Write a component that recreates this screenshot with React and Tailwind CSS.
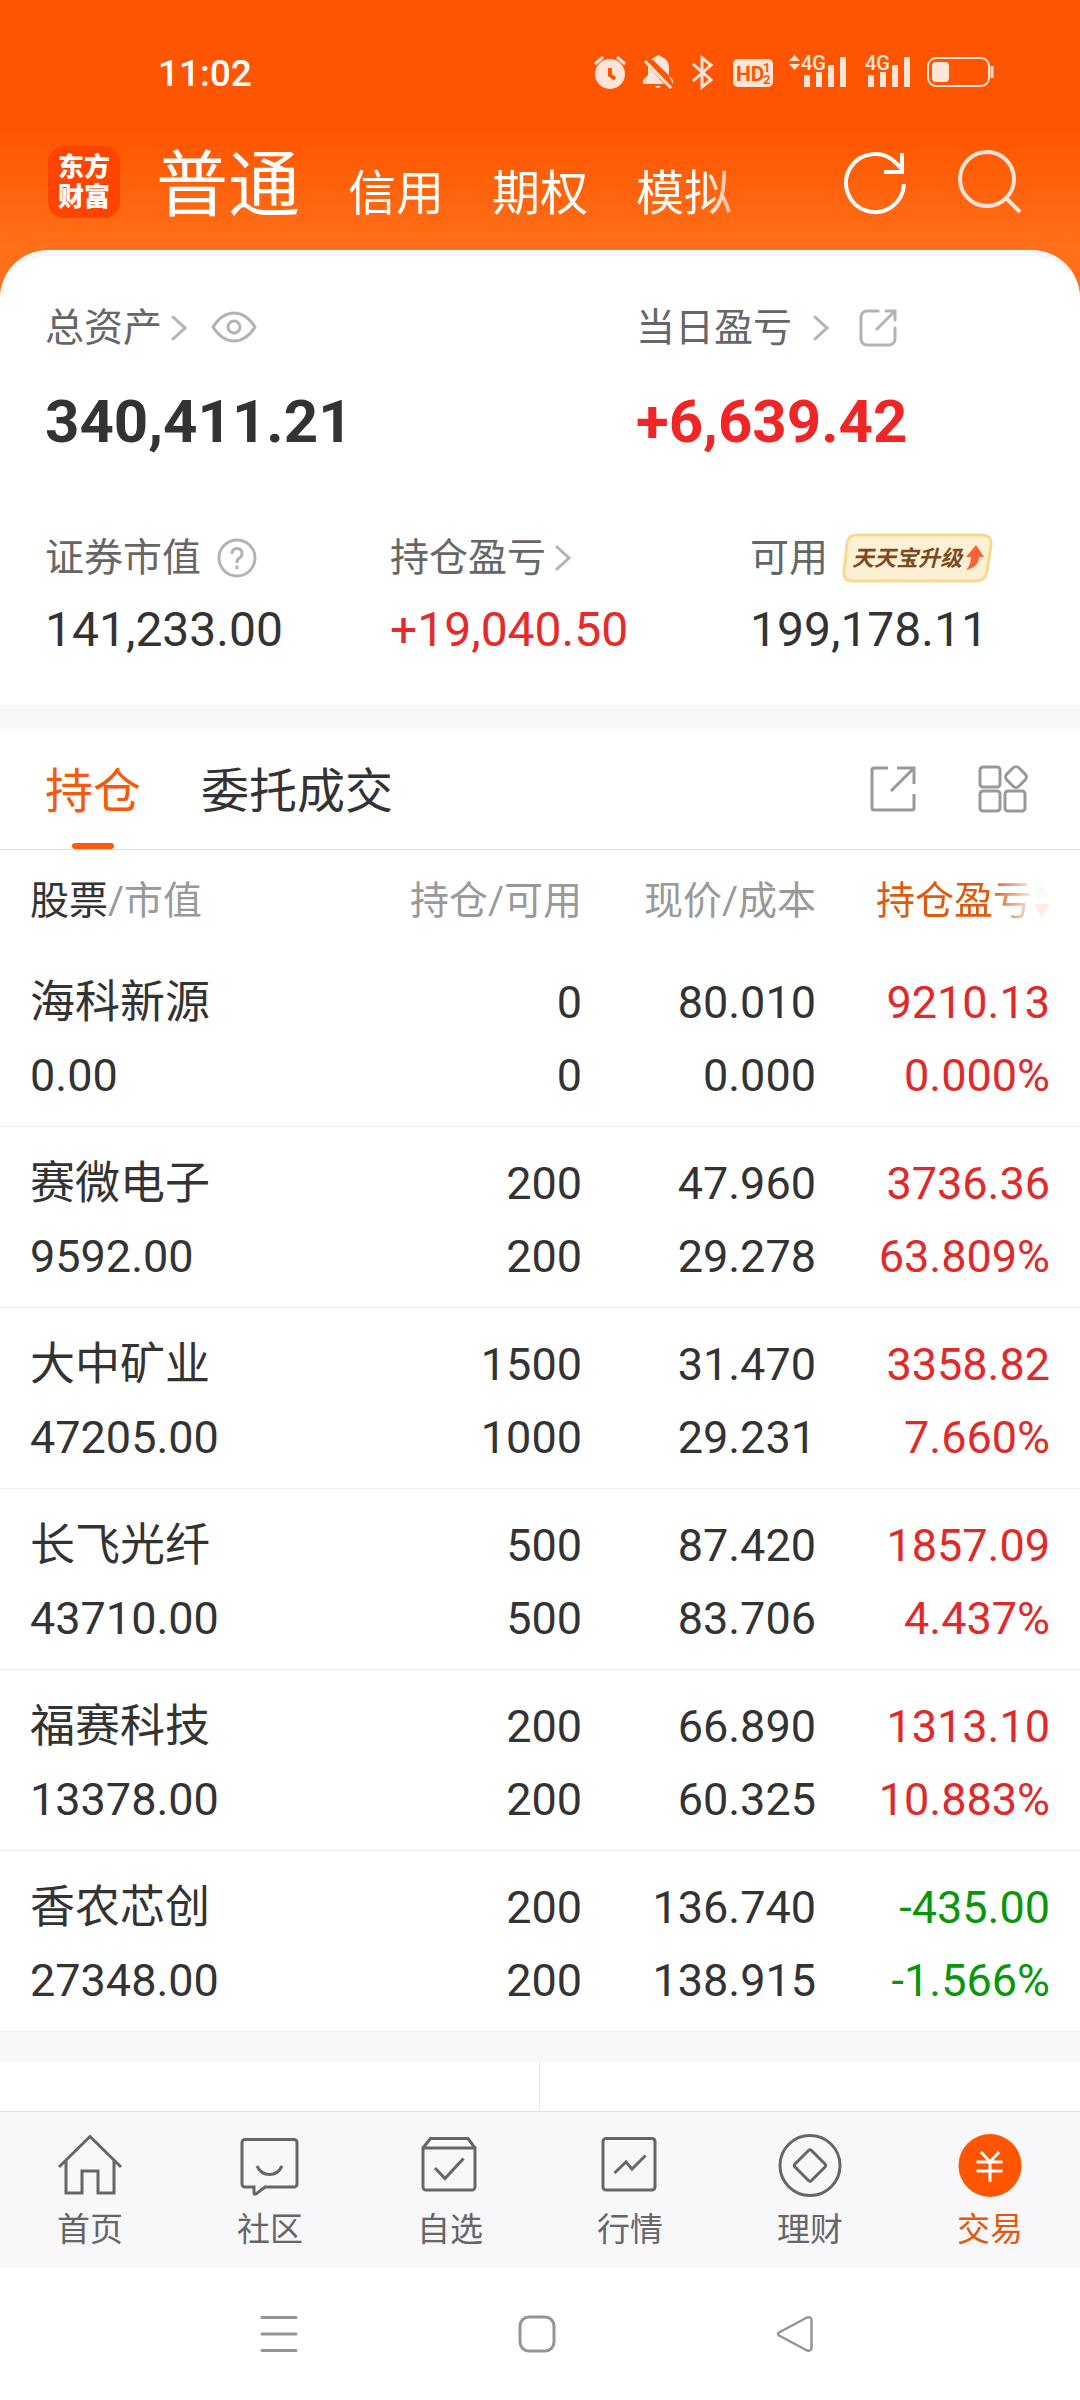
const accounts = ['信用', '期权', '模拟']

const holdings = [
  { name: '海科新源', value: '0.00', qty: '0', avail: '0', price: '80.010', cost: '0.000', pnl: '9210.13', rate: '0.000%' },
  { name: '赛微电子', value: '9592.00', qty: '200', avail: '200', price: '47.960', cost: '29.278', pnl: '3736.36', rate: '63.809%' },
  { name: '大中矿业', value: '47205.00', qty: '1500', avail: '1000', price: '31.470', cost: '29.231', pnl: '3358.82', rate: '7.660%' },
  { name: '长飞光纤', value: '43710.00', qty: '500', avail: '500', price: '87.420', cost: '83.706', pnl: '1857.09', rate: '4.437%' },
  { name: '福赛科技', value: '13378.00', qty: '200', avail: '200', price: '66.890', cost: '60.325', pnl: '1313.10', rate: '10.883%' },
  { name: '香农芯创', value: '27348.00', qty: '200', avail: '200', price: '136.740', cost: '138.915', pnl: '-435.00', rate: '-1.566%' },
]

const navItems = [
  { label: '首页', icon: <path d="M2 35 33 4.5 64 35M9 29v32h16V39h16v22h16V29" /> },
  { label: '社区', icon: <path d="M8 7.5h49a3 3 0 0 1 3 3V52a3 3 0 0 1-3 3H28l-9 7q-2 1-2-1v-6H8a3 3 0 0 1-3-3V10.500a3 3 0 0 1 3-3ZM20 34q4 8.500 12.500 8.500T45 34" /> },
  { label: '自选', icon: <path d="M6 16h52v39a3 3 0 0 1-3 3H9a3 3 0 0 1-3-3ZM6 16l7.500-9.500H51L58 16M18 36l10 10.500 18.500-20" /> },
  { label: '行情', icon: <path d="M9 6.500h46a3 3 0 0 1 3 3V55a3 3 0 0 1-3 3H9a3 3 0 0 1-3-3V9.500a3 3 0 0 1 3-3ZM17.500 41 29 30l6 7 13.500-13.500" /> },
  { label: '理财', icon: <><circle cx="33" cy="33.500" r="30" /><path d="M31.500 18.500q1.500-1.500 3 0l13.500 13.500q1.500 1.500 0 3L34.500 48.500q-1.500 1.500-3 0L18 35q-1.500-1.500 0-3Z" /></> },
  { label: '交易', active: true, icon: <><circle cx="33" cy="33.500" r="31.500" fill="#ff5500" stroke="none" /><path stroke="#fff" d="m24 20 9 10 9-10M19.500 30h26M19.500 39h26M33 30v20" /></> },
]

function Chevron() {
  return (
    <svg className="shrink-0" width="18" height="28" viewBox="0 0 18 28" fill="none" stroke="#b3b3b3" strokeWidth="3" strokeLinecap="round">
      <path d="M3 3 15 14 3 25" />
    </svg>
  )
}

function Signal({ arrows }) {
  return (
    <svg className="overflow-visible" width={arrows ? 58 : 48} height="40" viewBox={arrows ? '-10 -2 58 40' : '0 -2 48 40'} fill="currentColor">
      {arrows && <path d="m-4.500 0 5.500 6h-11ZM-4.500 15l5.500-6h-11Z" />}
      <text x="2" y="15" fontSize="20" fontWeight="500">4G</text>
      <path d="M5 20h6v12H5ZM17 17h6v15h-6ZM29 10h6v22h-6ZM41 2h6v30h-6Z" />
    </svg>
  )
}

function StatusBar() {
  return (
    <div className="h-[146px] flex items-center justify-between pl-[158px] pr-[86px]">
      <span className="text-[37px] leading-none font-medium">11:02</span>
      <div className="flex items-center gap-4 text-[#ffe5d8]">
        <svg width="33" height="36" viewBox="0 0 33 36" fill="none">
          <circle cx="16" cy="19" r="15" fill="currentColor" />
          <path d="M1 9 9 2M31 9l-8-7" stroke="currentColor" strokeWidth="3" />
          <path d="M16 13v7l5 4" stroke="#ff5500" strokeWidth="4" />
        </svg>
        <svg width="32" height="36" viewBox="0 0 32 36" fill="currentColor">
          <path d="M8 4.500Q11 2 13 1.500 15.500-1 18 1.500q8 3 8 11v8L10 5ZM5 11l16 18H0v-4l5-5Zm21 10 4 4v4ZM12 31h6q-3 4-6 0Z" />
          <path d="M2 6 28 33" stroke="currentColor" strokeWidth="3" />
        </svg>
        <svg width="26" height="36" viewBox="0 0 26 36" fill="none" stroke="currentColor" strokeWidth="3">
          <path d="m2 9 18 16-9 7V3l9 7L2 26" />
        </svg>
        <svg width="40" height="36" viewBox="0 0 40 36">
          <rect y="4" width="40" height="28" rx="5" fill="currentColor" />
          <g fill="#ff5500" fontWeight="700">
            <text x="3" y="26" fontSize="21" fontFamily="Liberation Sans Narrow, Roboto">HD</text>
            <text x="30" y="17" fontSize="13">1</text>
            <text x="30" y="29" fontSize="13">2</text>
          </g>
        </svg>
        <Signal arrows />
        <Signal />
        <svg width="67" height="36" viewBox="0 0 67 36" fill="none">
          <rect x="1" y="3" width="61" height="28" rx="8" stroke="currentColor" strokeWidth="2" />
          <rect x="5" y="7" width="17" height="20" rx="4" fill="currentColor" />
          <path d="M65 11v12" stroke="currentColor" strokeWidth="3" />
        </svg>
      </div>
    </div>
  )
}

function Header() {
  return (
    <header className="bg-[linear-gradient(#ff5500_130px,#ff7019_250px)] text-white">
      <StatusBar />
      <div className="flex items-center pl-12 pr-[58px] pb-20 -mb-12">
        <a href="#home" className="size-[72px] shrink-0 rounded-2xl bg-[#ff4400] flex items-center justify-center text-center text-[26px] leading-[30px] font-black">
          东方<br />财富
        </a>
        <nav className="flex-1 h-[72px] ml-9 flex items-baseline gap-12 leading-[80px] whitespace-nowrap [mask-image:linear-gradient(to_right,#000_545px,transparent_620px)]">
          <a href="#normal" className="text-7xl leading-[80px]">普通</a>
          {accounts.map((a) => (
            <a key={a} href={`#${a}`} className="text-5xl leading-[72px]">{a}</a>
          ))}
        </nav>
        <button aria-label="刷新" className="mr-12">
          <svg width="66" height="66" viewBox="0 0 66 66" fill="none" stroke="#fff" strokeWidth="4">
            <path d="M62 35A29 29 0 1 1 54 14L61 21" />
            <path d="M60 4v19H42" />
          </svg>
        </button>
        <button aria-label="搜索">
          <svg width="66" height="66" viewBox="0 0 66 66" fill="none" stroke="#ffe5d8" strokeWidth="4">
            <circle cx="31" cy="30" r="27" />
            <path d="m50 49 14 14" />
          </svg>
        </button>
      </div>
    </header>
  )
}

function Summary() {
  return (
    <section className="relative bg-white border-t-6 border-[#f7f7f9] rounded-t-[48px] px-[45px] pt-[42px] pb-[43px] text-[39px] text-[#666]">
      <div className="grid grid-cols-[197fr_133fr]">
        <div>
          <div className="h-[60px] flex items-center">
            <a href="#assets" className="flex items-center gap-2">总资产 <Chevron /></a>
            <button aria-label="隐藏金额" className="ml-[22px]">
              <svg width="48" height="36" viewBox="0 0 48 36" fill="none" stroke="#b3b3b3" strokeWidth="3">
                <path d="M3 17Q12 3 24 3t21 14Q36 31 24 31T3 17Z" strokeLinejoin="round" />
                <circle cx="24" cy="17" r="6" />
              </svg>
            </button>
          </div>
          <div className="mt-8 text-6xl leading-[64px] font-bold text-[#333]">340,411.21</div>
        </div>
        <div>
          <div className="h-[60px] flex items-center">
            <a href="#today" className="flex items-center gap-5">当日盈亏 <Chevron /></a>
            <button aria-label="分享当日盈亏" className="ml-7">
              <svg width="40" height="40" viewBox="0 0 40 40" fill="none" stroke="#b3b3b3" strokeWidth="3" strokeLinecap="round">
                <path d="M20 3H9a6 6 0 0 0-6 6v22a6 6 0 0 0 6 6h22a6 6 0 0 0 6-6V20M19 21 36 4M28 3h9v9" />
              </svg>
            </button>
          </div>
          <div className="mt-8 text-6xl leading-[64px] font-bold text-[#f02626]">+6,639.42</div>
        </div>
      </div>
      <div className="grid grid-cols-[23fr_24fr_19fr] mt-[74px]">
        <div>
          <div className="h-[60px] flex items-center gap-4">
            证券市值
            <button aria-label="说明">
              <svg width="40" height="40" viewBox="0 0 40 40" fill="none" stroke="#b3b3b3" strokeWidth="3">
                <circle cx="20" cy="20" r="18" />
                <path d="M15 16q0-5.500 5-5.500t5 5q0 3-2.500 4.500T20 24v1" />
                <path d="M20 27.500v3.500" />
              </svg>
            </button>
          </div>
          <div className="mt-[10px] text-5xl leading-[64px] text-[#333]">141,233.00</div>
        </div>
        <div>
          <a href="#pnl" className="h-[60px] flex items-center gap-2">持仓盈亏 <Chevron /></a>
          <div className="mt-[10px] text-5xl leading-[64px] text-[#e62a2a]">+19,040.50</div>
        </div>
        <div>
          <div className="h-[60px] flex items-center whitespace-nowrap">
            可用
            <a href="#upgrade" className="relative ml-[14px] w-[152px] h-[50px] flex items-center pl-[10px] text-[22px] font-bold italic text-[#7a4a26]">
              <svg className="absolute inset-0" width="152" height="50" viewBox="0 0 152 50">
                <path d="M14 2h126q10 0 9 10l-4 27q-2 9-11 9H11q-10 0-9-9L5 11q1-9 9-9Z" fill="#fef0d3" stroke="#f7da8c" strokeWidth="3" />
                <path d="M134 12l8 12h-5q0 10-13 13 5-5 5-13h-5Z" fill="#fb6238" />
              </svg>
              <span className="relative">天天宝升级</span>
            </a>
          </div>
          <div className="mt-[10px] text-5xl leading-[64px] text-[#333]">199,178.11</div>
        </div>
      </div>
    </section>
  )
}

function Cell({ top, bottom, className }) {
  return (
    <td className={`pt-5 pb-[14px] border-b border-[#ededed] ${className}`}>
      <div>{top}</div>
      <div>{bottom}</div>
    </td>
  )
}

function Holdings() {
  return (
    <section>
      <div className="h-[121px] flex items-center pl-[45px] pr-[51px] border-b border-[#dedede] text-5xl text-[#333]">
        <button className="relative h-[120px] pt-[6px] text-[#f55a0c]">
          持仓
          <span className="absolute bottom-0 left-1/2 -translate-x-1/2 w-[42px] h-[6px] rounded-full bg-[#ff5a0a]" />
        </button>
        <button className="h-[120px] pt-[6px] ml-15">委托成交</button>
        <button aria-label="分享持仓" className="ml-auto mr-15">
          <svg width="48" height="48" viewBox="0 0 48 48" fill="none" stroke="#999" strokeWidth="3">
            <path d="M19 3H5a2 2 0 0 0-2 2v38a2 2 0 0 0 2 2h38a2 2 0 0 0 2-2V29M22 26 44 4M28 3h17v16" />
          </svg>
        </button>
        <button aria-label="更多功能">
          <svg width="52" height="50" viewBox="0 0 52 50" fill="none" stroke="#999" strokeWidth="3">
            <rect x="3" y="3" width="20" height="20" rx="3" />
            <rect x="3" y="27" width="20" height="20" rx="3" />
            <rect x="28" y="27" width="20" height="20" rx="3" />
            <rect x="30.500" y="4.500" width="17" height="17" rx="4" transform="rotate(45 39 13)" />
          </svg>
        </button>
      </div>
      <table className="w-full table-fixed border-separate border-spacing-0 text-right text-[45px] leading-[73px] text-[#333]">
        <colgroup>
          <col />
          <col className="w-[235px]" />
          <col className="w-[234px]" />
          <col className="w-[264px]" />
        </colgroup>
        <thead className="text-[39px] text-[#999] whitespace-nowrap">
          <tr className="h-24">
            <th className="pt-[6px] pl-[30px] text-left font-normal"><span className="text-[#333]">股票</span>/市值</th>
            <th className="pt-[6px] font-normal">持仓/可用</th>
            <th className="pt-[6px] font-normal">现价/成本</th>
            <th className="pt-[6px] pr-[30px] font-normal">
              <button className="inline-flex items-center gap-[2px] text-[#e0590f] [mask-image:linear-gradient(to_right,#000_115px,rgba(0,0,0,.1)_158px)]">
                持仓盈亏
                <svg width="16" height="36" viewBox="0 0 16 36">
                  <path d="m8 1 8 14H0Z" fill="#ccc" />
                  <path d="m8 35 8-14H0Z" fill="#ff5500" />
                </svg>
              </button>
            </th>
          </tr>
        </thead>
        <tbody>
          {holdings.map((h) => (
            <tr key={h.name}>
              <Cell top={h.name} bottom={h.value} className="pl-[30px] text-left" />
              <Cell top={h.qty} bottom={h.avail} />
              <Cell top={h.price} bottom={h.cost} />
              <Cell top={h.pnl} bottom={h.rate} className={h.pnl.startsWith('-') ? 'pr-[30px] text-[#0a960a]' : 'pr-[30px] text-[#e02a2a]'} />
            </tr>
          ))}
        </tbody>
      </table>
    </section>
  )
}

function BottomNav() {
  return (
    <nav className="grid grid-cols-6 pt-5 pb-[18px] bg-[#f8f8fa] border-t border-[#e0e0e0]">
      {navItems.map((n) => (
        <a key={n.label} href={`#${n.label}`} className={`flex flex-col items-center gap-3 text-[33px] leading-10 ${n.active ? 'text-[#e0590f]' : 'text-[#666]'}`}>
          <svg width="66" height="66" viewBox="0 0 66 66" fill="none" stroke="#666" strokeWidth="3">{n.icon}</svg>
          {n.label}
        </a>
      ))}
    </nav>
  )
}

function SystemBar() {
  return (
    <div className="h-[132px] flex items-center justify-center gap-[220px] pr-[6px] text-[#959595]">
      <button aria-label="菜单">
        <svg width="38" height="38" viewBox="0 0 38 38" fill="none" stroke="currentColor" strokeWidth="3" strokeLinecap="round">
          <path d="M2 2.500h34M2 19h34M2 35.500h34" />
        </svg>
      </button>
      <button aria-label="主屏幕">
        <svg width="38" height="38" viewBox="0 0 38 38" fill="none" stroke="currentColor" strokeWidth="3">
          <rect x="2" y="2" width="34" height="34" rx="9" />
        </svg>
      </button>
      <button aria-label="返回">
        <svg width="38" height="38" viewBox="0 0 38 38" fill="none" stroke="currentColor" strokeWidth="2.500" strokeLinejoin="round">
          <path d="M3 17.500 31 2.500q4.500-1 4.500 3v27q0 4-4.500 3L3 20.500q-2-1.500 0-3Z" />
        </svg>
      </button>
    </div>
  )
}

export default function App() {
  return (
    <div className="bg-white font-[Roboto,'Noto_Sans_CJK_SC',sans-serif]">
      <Header />
      <main>
        <Summary />
        <div className="h-6 bg-[#f8f8fa]" />
        <Holdings />
        <div className="h-[30px] bg-[#f7f8fa]" />
        <div className="h-[49px] grid grid-cols-2">
          <div className="border-r border-[#e8e8e8]" />
        </div>
      </main>
      <BottomNav />
      <SystemBar />
    </div>
  )
}
